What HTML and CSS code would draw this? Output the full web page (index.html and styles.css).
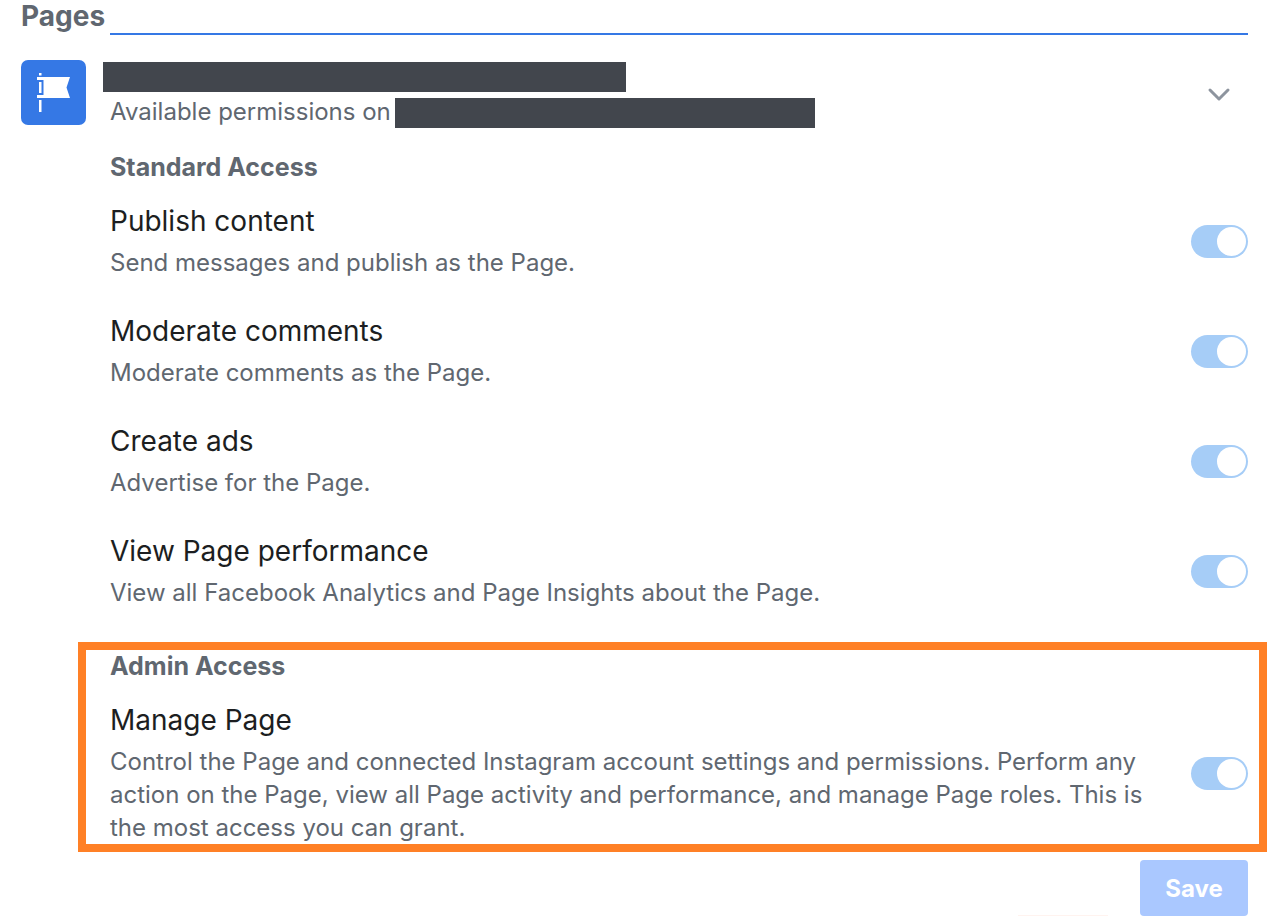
FILE: index.html
```html
<!DOCTYPE html>
<html lang="en">
<head>
  <meta charset="UTF-8" />
  <meta name="viewport" content="width=device-width, initial-scale=1" />
  <title>Page permissions</title>
  <link rel="stylesheet" href="styles.css">
</head>
<body>
  <form class="permissions">
    <div class="section-title">
      <h1>Pages</h1>
      <div class="rule"></div>
    </div>

    <div class="asset">
      <svg class="asset-icon" viewBox="0 0 65 65" aria-hidden="true">
        <rect width="65" height="65" rx="7" fill="#3578e5"/>
        <g fill="#fff">
          <rect x="18" y="13" width="2.500" height="2.500"/>
          <path d="M16 17h33l-3.500 10.500L49 38H16v-3h6.500V20H16z"/>
          <rect x="18" y="22" width="2.500" height="11"/>
          <rect x="18" y="40" width="2.500" height="12"/>
        </g>
      </svg>
      <div class="asset-text">
        <div class="redacted redacted-name"></div>
        <div class="asset-sub">
          <span>Available permissions on</span>
          <div class="redacted redacted-page"></div>
        </div>
      </div>
      <button type="button" class="collapse" aria-label="Collapse">
        <svg width="24" height="16" viewBox="0 0 24 16" fill="none" stroke="#8d949e" stroke-width="3" stroke-linecap="round" stroke-linejoin="round" aria-hidden="true">
          <path d="M3 4l9 9 9-9"/>
        </svg>
      </button>
    </div>

    <div class="groups">
      <section class="group">
        <h2>Standard Access</h2>
        <div class="permission">
          <label for="publish">
            <span class="name">Publish content</span>
            <span class="desc">Send messages and publish as the Page.</span>
          </label>
          <input type="checkbox" class="toggle" id="publish" checked disabled />
        </div>
        <div class="permission">
          <label for="moderate">
            <span class="name">Moderate comments</span>
            <span class="desc">Moderate comments as the Page.</span>
          </label>
          <input type="checkbox" class="toggle" id="moderate" checked disabled />
        </div>
        <div class="permission">
          <label for="ads">
            <span class="name">Create ads</span>
            <span class="desc">Advertise for the Page.</span>
          </label>
          <input type="checkbox" class="toggle" id="ads" checked disabled />
        </div>
        <div class="permission">
          <label for="performance">
            <span class="name">View Page performance</span>
            <span class="desc">View all Facebook Analytics and Page Insights about the Page.</span>
          </label>
          <input type="checkbox" class="toggle" id="performance" checked disabled />
        </div>
      </section>

      <section class="group highlight">
        <h2>Admin Access</h2>
        <div class="permission">
          <label for="manage">
            <span class="name">Manage Page</span>
            <span class="desc">Control the Page and connected Instagram account settings and permissions. Perform any action on the Page, view all Page activity and performance, and manage Page roles. This is the most access you can grant.</span>
          </label>
          <input type="checkbox" class="toggle" id="manage" checked disabled />
        </div>
      </section>
    </div>

    <div class="footer">
      <div class="footer-line"></div>
      <button type="submit" class="save" disabled>Save</button>
    </div>
  </form>
</body>
</html>
```

FILE: styles.css
```css
* {
  box-sizing: border-box;
}
body {
  margin: 0;
  background: #fff;
  color: #606770;
  font-family: Inter, "Liberation Sans", sans-serif;
  font-size: 24px;
  line-height: 33px;
}
h1,
h2 {
  margin: 0;
  font-weight: 700;
}
h1 {
  font-size: 28px;
  line-height: 32px;
}
h2 {
  font-size: 25px;
}
.permissions {
  padding: 0 25px 0 21px;
}
.section-title {
  display: flex;
  gap: 5px;
  height: 35px;
}
.rule {
  flex: 1;
  border-bottom: 2px solid #3578e5;
}
.asset {
  display: flex;
  gap: 24px;
  margin-top: 25px;
}
.asset-icon {
  flex: none;
  width: 65px;
  height: 65px;
}
.asset-text {
  flex: 1;
  padding-top: 2px;
}
.asset-sub {
  display: flex;
  gap: 4px;
  margin-top: 3px;
}
.redacted {
  height: 30px;
  background: #42464d;
}
.redacted-name {
  width: 523px;
  margin-left: -7px;
}
.redacted-page {
  width: 420px;
  margin-top: 3px;
}
.collapse {
  align-self: center;
  display: flex;
  margin-right: 17px;
  padding: 0;
  background: none;
  border: none;
}
.groups {
  padding-left: 89px;
  margin-top: 23px;
}
.permission {
  display: flex;
  align-items: center;
  gap: 24px;
  margin-top: 35px;
}
h2 + .permission {
  margin-top: 20px;
}
.permission label {
  flex: 1;
}
.name,
.desc {
  display: block;
}
.name {
  margin-bottom: 8px;
  color: #1c1e21;
  font-size: 28px;
  line-height: 34px;
}
.toggle {
  appearance: none;
  display: flex;
  justify-content: flex-end;
  flex: none;
  width: 57px;
  height: 33px;
  margin: 0;
  padding: 2px;
  border-radius: 17px;
  background: #a6cdf7;
}
.toggle::before {
  content: "";
  width: 29px;
  height: 29px;
  border-radius: 50%;
  background: #fff;
}
.highlight {
  margin: 33px -19px 0 -32px;
  padding: 0 11px 0 24px;
  border: 8px solid #ff8026;
}
.footer {
  display: flex;
  justify-content: flex-end;
  align-items: flex-end;
  gap: 32px;
  margin-top: 8px;
}
.footer-line {
  width: 90px;
  border-bottom: 1px solid #fff3ef;
}
.save {
  width: 108px;
  height: 56px;
  padding: 0;
  border: none;
  border-radius: 4px;
  background: #aac8ff;
  color: #fff;
  font-family: inherit;
  font-size: 24px;
  font-weight: 700;
}
```
